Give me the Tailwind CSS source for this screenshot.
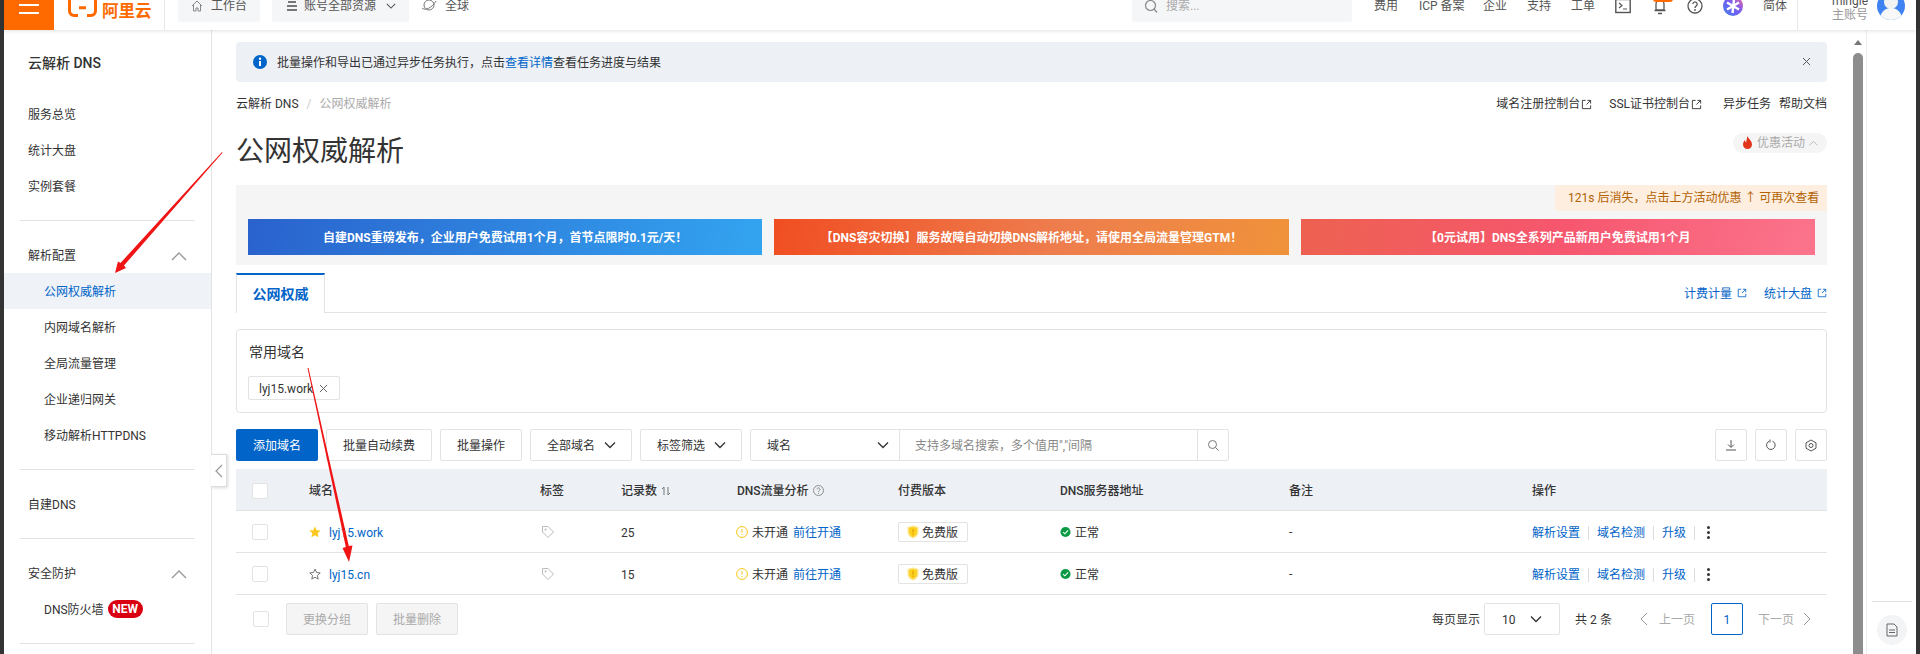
<!DOCTYPE html>
<html lang="zh-CN">
<head>
  <meta charset="UTF-8" />
  <title>公网权威解析 - 云解析 DNS</title>
  <script src="https://cdn.jsdelivr.net/npm/@tailwindcss/browser@4"></script>
</head>
<body class="flex h-screen overflow-hidden bg-white text-xs text-[#333] font-['Roboto','Noto_Sans_CJK_SC',sans-serif]">
  <svg class="hidden">
    <symbol id="down" viewBox="0 0 12 12"><path d="M1 3.5 6 8.5 11 3.5" fill="none" stroke="currentColor" stroke-width="1.3"/></symbol>
    <symbol id="up" viewBox="0 0 16 10"><path d="M1 9 8 2 15 9" fill="none" stroke="currentColor" stroke-width="1.4"/></symbol>
    <symbol id="ext" viewBox="0 0 12 12"><path d="M5 1.5H1.5v9h9V7M7 1.5h3.5V5M10.5 1.5 6 6" fill="none" stroke="currentColor" stroke-width="1"/></symbol>
    <symbol id="tag" viewBox="0 0 14 14"><path d="M1.5 1.5h5.5l5.5 5.5-5.5 5.5-5.5-5.5z" fill="none" stroke="currentColor"/><circle cx="4.5" cy="4.5" r="1" fill="currentColor"/></symbol>
    <symbol id="warn" viewBox="0 0 12 12"><circle cx="6" cy="6" r="5.4" fill="none" stroke="#f5c518"/><path d="M6 3v3.6M6 8v1" stroke="#f5c518"/></symbol>
    <symbol id="shield" viewBox="0 0 12 14"><path d="M6 .5 11.5 2v5c0 3.5-3 5.5-5.5 6.5C3.5 12.5.5 10.500.5 7V2z" fill="#fde58a"/><path d="M6 2 10 3v4c0 2.500-2 4-4 5-2-1-4-2.500-4-5V3z" fill="#fbd01f"/><path d="M6 4v3.500" stroke="#e8a400" stroke-width="1.4"/><circle cx="6" cy="9.300" r=".8" fill="#e8a400"/></symbol>
    <symbol id="ok" viewBox="0 0 12 12"><circle cx="6" cy="6" r="5.5" fill="#0a9a44"/><path d="M3.300 6.200 5.300 8 8.800 4.200" fill="none" stroke="#fff" stroke-width="1.200"/></symbol>
  </svg>

  <div class="w-1 shrink-0 bg-[#333]"></div>

  <div class="flex min-w-0 flex-1 flex-col">
    <!-- top bar, cut by the top of the shot -->
    <header class="relative z-10 h-[30px] shrink-0 bg-white shadow-[0_1px_4px_rgba(0,0,0,0.12)]">
      <div class="-mt-[19px] flex h-[49px] items-center pr-[11px] text-[#555]">
        <div class="flex h-full w-[50px] shrink-0 flex-col items-center justify-center gap-[6px] bg-[#ff6a00] pb-[1px]">
          <span class="h-[2px] w-[20px] bg-white"></span>
          <span class="h-[2px] w-[20px] bg-white"></span>
          <span class="h-[2px] w-[20px] bg-white"></span>
        </div>
        <div class="flex h-full w-[111px] shrink-0 items-center gap-[5px] border-r border-[#e8e8e8] pl-[14px] text-[#ff6a00]">
          <svg class="h-[22px] w-[29px]" viewBox="0 0 29 22"><path d="M10 20.500H6A4.500 4.500 0 0 1 1.500 16V0M19 20.500h4a4.500 4.500 0 0 0 4.500-4.500V0M11 12.700h7" fill="none" stroke="currentColor" stroke-width="3"/></svg>
          <span class="pt-[13px] text-[16.5px] leading-none font-bold whitespace-nowrap">阿里云</span>
        </div>
        <div class="ml-[13px] flex h-[32px] w-[82px] items-center rounded-[2px] bg-[#f5f6f8] pl-[13px]">
          <svg class="h-[12px] w-[12px] text-[#888]" viewBox="0 0 12 12"><path d="M1 6 6 1l5 5M2.5 5v6H5V8h2v3h2.500V5" fill="none" stroke="currentColor"/></svg>
          <span class="ml-[8px]">工作台</span>
        </div>
        <div class="ml-[12px] flex h-[32px] w-[137px] items-center rounded-[2px] bg-[#f5f6f8] pl-[14px]">
          <svg class="h-[12px] w-[12px] text-[#777]" viewBox="0 0 12 12"><path d="M2 2h8M1 6h10M1 10h10" stroke="currentColor" stroke-width="1.800"/></svg>
          <span class="ml-[6px]">账号全部资源</span>
          <svg class="ml-[10px] h-[10px] w-[10px]"><use href="#down"/></svg>
        </div>
        <div class="ml-[12px] flex items-center">
          <svg class="h-[14px] w-[16px] text-[#777]" viewBox="0 0 16 14"><circle cx="8" cy="6" r="5" fill="none" stroke="currentColor"/><path d="M1 9c3 3 10 0 14-7" fill="none" stroke="currentColor"/></svg>
          <span class="ml-[8px]">全球</span>
        </div>

        <div class="ml-auto flex h-[32px] w-[220px] items-center rounded-[2px] bg-[#f5f6f8] pl-[12px] text-[#aaa]">
          <svg class="h-[14px] w-[14px] text-[#888]" viewBox="0 0 14 14"><circle cx="6.500" cy="6.500" r="5" fill="none" stroke="currentColor" stroke-width="1.200"/><path d="m10 10 3 3.500" stroke="currentColor" stroke-width="1.200"/></svg>
          <span class="ml-[8px]">搜索...</span>
        </div>
        <span class="ml-[22px] w-[24px]">费用</span>
        <span class="ml-[21px] w-[44px] whitespace-nowrap">ICP 备案</span>
        <span class="ml-[20px] w-[24px]">企业</span>
        <span class="ml-[20px] w-[24px]">支持</span>
        <span class="ml-[20px] w-[24px]">工单</span>
        <svg class="ml-[20px] h-[16px] w-[16px]" viewBox="0 0 16 16"><rect x=".8" y="1.500" width="14.400" height="13" fill="none" stroke="currentColor" stroke-width="1.400"/><path d="m4 5 3 2.500L4 10M8 11h4" fill="none" stroke="currentColor" stroke-width="1.200"/></svg>
        <div class="relative ml-[22px] flex h-[16px] w-[14px] justify-center">
          <svg class="h-[17px] w-[14px]" viewBox="0 0 14 17"><path d="M3 12V6a4 4 0 0 1 8 0v6zM1.500 12.500h11M5 15.500h4" fill="none" stroke="currentColor" stroke-width="1.300"/></svg>
          <span class="absolute -top-[1px] left-0 h-[5px] w-[20px] rounded-b-[3px] bg-[#ff6a00]"></span>
        </div>
        <svg class="ml-[20px] h-[16px] w-[16px]" viewBox="0 0 16 16"><circle cx="8" cy="8" r="7" fill="none" stroke="currentColor" stroke-width="1.300"/><path d="M5.800 6a2.200 2.200 0 1 1 3.400 2c-.8.500-1.200 1-1.200 2" fill="none" stroke="currentColor" stroke-width="1.300"/><circle cx="8" cy="12" r=".9" fill="currentColor"/></svg>
        <svg class="mt-[1px] ml-[20px] h-[20px] w-[20px]" viewBox="0 0 20 20">
          <defs><linearGradient id="ai" x1="0" y1="1" x2="1" y2="0"><stop offset="0" stop-color="#3f7df0"/><stop offset=".55" stop-color="#7a5cf0"/><stop offset="1" stop-color="#ee6aa0"/></linearGradient></defs>
          <circle cx="10" cy="10" r="10" fill="url(#ai)"/>
          <path d="M11 3 9.500 17M4 6.500l12 7M16 6.500l-12 7" stroke="#fff" stroke-width="2.400"/>
        </svg>
        <span class="ml-[20px] w-[24px]">简体</span>
        <div class="ml-[10px] h-full w-px bg-[#e8e8e8]"></div>
        <div class="ml-[32px] flex w-[38px] flex-col items-end pt-[5px] text-right leading-[14px]">
          <span>mingle</span>
          <span class="text-[#999]">主账号</span>
        </div>
        <div class="relative ml-[9px] h-[28px] w-[28px] overflow-hidden rounded-full bg-[#3f82f2]">
          <div class="absolute top-[3px] left-[7px] h-[14px] w-[14px] rounded-full bg-[#f2f2f2]"></div>
          <div class="absolute top-[16px] left-[3px] h-[14px] w-[22px] rounded-t-full bg-[#f8f8f8]"></div>
        </div>
      </div>
    </header>

    <div class="flex min-h-0 flex-1">
      <!-- side menu -->
      <aside class="relative w-[208px] shrink-0 border-r border-[#e3e3e3]">
        <div class="mt-[15px] flex h-[36px] items-center pl-[24px] text-sm font-medium">云解析 DNS</div>
        <div class="mt-[15px] mb-[16px]">
          <div class="flex h-[36px] items-center pt-[2px] pl-[24px]">服务总览</div>
          <div class="flex h-[36px] items-center pt-[2px] pl-[24px]">统计大盘</div>
          <div class="flex h-[36px] items-center pt-[2px] pl-[24px]">实例套餐</div>
        </div>
        <div class="mx-[16px] h-px bg-[#e3e3e3]"></div>
        <div class="my-[16px]">
          <div class="flex h-[36px] items-center justify-between pt-[2px] pr-[24px] pl-[24px]">解析配置<svg class="h-[10px] w-[16px] text-[#999]"><use href="#up"/></svg></div>
          <div class="flex h-[36px] items-center bg-[#eff3f8] pt-[2px] pl-[40px] text-[#0064c8]">公网权威解析</div>
          <div class="flex h-[36px] items-center pt-[2px] pl-[40px]">内网域名解析</div>
          <div class="flex h-[36px] items-center pt-[2px] pl-[40px]">全局流量管理</div>
          <div class="flex h-[36px] items-center pt-[2px] pl-[40px]">企业递归网关</div>
          <div class="flex h-[36px] items-center pt-[2px] pl-[40px]">移动解析HTTPDNS</div>
        </div>
        <div class="mx-[16px] h-px bg-[#e3e3e3]"></div>
        <div class="my-[16px] flex h-[36px] items-center pt-[2px] pl-[24px]">自建DNS</div>
        <div class="mx-[16px] h-px bg-[#e3e3e3]"></div>
        <div class="my-[16px]">
          <div class="flex h-[36px] items-center justify-between pt-[2px] pr-[24px] pl-[24px]">安全防护<svg class="h-[10px] w-[16px] text-[#999]"><use href="#up"/></svg></div>
          <div class="flex h-[36px] items-center pl-[40px]"><span class="pt-[2px]">DNS防火墙</span><span class="ml-[4px] flex h-[18px] w-[35px] items-center justify-center rounded-full bg-[#d90012] text-xs font-bold text-white">NEW</span></div>
        </div>
        <div class="mx-[16px] h-px bg-[#e3e3e3]"></div>
        <!-- collapse handle sits over the menu edge -->
        <div class="absolute top-[424px] -right-[16px] flex h-[33px] w-[16px] items-center justify-center border border-l-0 border-[#ddd] bg-white text-[#999] shadow-[1px_1px_3px_rgba(0,0,0,0.15)]">
          <svg class="h-[14px] w-[8px]" viewBox="0 0 8 14"><path d="M7 1 1 7l6 6" fill="none" stroke="currentColor" stroke-width="1.200"/></svg>
        </div>
      </aside>

      <main class="ml-[24px] w-[1591px] shrink-0">
        <div class="mt-[12px] flex h-[40px] items-center rounded-[4px] bg-[#edf0f5] pr-[16px] pl-[17px]">
          <svg class="h-[14px] w-[14px]" viewBox="0 0 14 14"><circle cx="7" cy="7" r="7" fill="#0064c8"/><path d="M7 6v5" stroke="#fff" stroke-width="2"/><circle cx="7" cy="3.700" r="1.200" fill="#fff"/></svg>
          <span class="ml-[10px] pt-[2px]">批量操作和导出已通过异步任务执行，点击<span class="text-[#0064c8]">查看详情</span>查看任务进度与结果</span>
          <svg class="mb-[2px] ml-auto h-[9px] w-[9px] text-[#555]" viewBox="0 0 9 9"><path d="m1 1 7 7M8 1 1 8" stroke="currentColor"/></svg>
        </div>

        <div class="mt-[12px] flex h-[18px] items-center pt-[2px]">
          <span>云解析 DNS</span>
          <span class="mx-[8px] text-[#ccc]">/</span>
          <span class="text-[#aaa]">公网权威解析</span>
          <span class="ml-auto">域名注册控制台</span>
          <svg class="ml-[1px] h-[11px] w-[11px]"><use href="#ext"/></svg>
          <span class="ml-[17px]">SSL证书控制台</span>
          <svg class="ml-[1px] h-[11px] w-[11px]"><use href="#ext"/></svg>
          <span class="ml-[21px]">异步任务</span>
          <span class="ml-[8px]">帮助文档</span>
        </div>

        <div class="mt-[18px] flex h-[40px] items-start">
          <h1 class="pt-[2px] text-[28px] leading-[40px] font-normal">公网权威解析</h1>
          <div class="mt-[3px] ml-auto flex h-[20px] w-[94px] items-center rounded-full bg-[#f5f5f6] pl-[9px] text-[#aaa]">
            <svg class="h-[14px] w-[11px]" viewBox="0 0 11 14"><path d="M5.500 0c.5 2.500 4.500 4.500 4.500 8.500a4.500 4.500 0 0 1-9 0C1 6.500 2 5 3 4c0 1.500.5 2 1.200 2.300C4.500 4 4.800 2 5.500 0z" fill="#e2361c"/></svg>
            <span class="ml-[4px]">优惠活动</span>
            <svg class="ml-[4px] h-[6px] w-[9px]"><use href="#up"/></svg>
          </div>
        </div>

        <div class="relative mt-[15px] h-[80px] bg-[#f5f5f5] px-[12px] pt-[34px]">
          <div class="absolute top-0 right-0 flex h-[26px] w-[272px] items-center bg-[#fdeee0] pl-[13px] text-[#b26200]">121s 后消失，点击上方活动优惠 ↑ 可再次查看</div>
          <div class="flex h-[36px] gap-[12px] text-center font-bold text-white">
            <div class="flex-1 content-center bg-[linear-gradient(100deg,#2a62cd,#33a4f0)] pt-[1px]">自建DNS重磅发布，企业用户免费试用1个月，首节点限时0.1元/天！</div>
            <div class="flex-1 content-center bg-[linear-gradient(100deg,#f04e22,#ee7d4e_55%,#f0923a)] pt-[1px]">【DNS容灾切换】服务故障自动切换DNS解析地址，请使用全局流量管理GTM！</div>
            <div class="flex-1 content-center bg-[linear-gradient(100deg,#ed6150,#f6566e_50%,#fb748c)] pt-[1px]">【0元试用】DNS全系列产品新用户免费试用1个月</div>
          </div>
        </div>

        <div class="mt-[8px] flex h-[40px] border-b border-[#e3e3e3]">
          <div class="-mb-px flex w-[89px] items-center justify-center border-x border-t-2 border-x-[#e3e3e3] border-t-[#0064c8] bg-white text-sm font-bold text-[#0064c8]">公网权威</div>
          <div class="ml-auto flex items-center pt-[3px] text-[#0064c8]">
            <span>计费计量</span>
            <svg class="mb-[3px] ml-[5px] h-[10px] w-[10px]"><use href="#ext"/></svg>
            <span class="ml-[17px]">统计大盘</span>
            <svg class="mb-[3px] ml-[5px] h-[10px] w-[10px]"><use href="#ext"/></svg>
          </div>
        </div>

        <div class="mt-[16px] h-[84px] rounded-[4px] border border-[#e3e3e3] px-[11px]">
          <div class="mt-[12px] pl-[1px] text-sm leading-[20px]">常用域名</div>
          <div class="mt-[14px] flex h-[24px] w-[92px] items-center rounded-[2px] border border-[#e3e3e3] pt-[1px] pl-[10px]">
            lyj15.work
            <svg class="ml-[6px] h-[9px] w-[9px] text-[#666]" viewBox="0 0 9 9"><path d="m1 1 7 7M8 1 1 8" stroke="currentColor"/></svg>
          </div>
        </div>

        <div class="mt-[16px] flex h-[32px] gap-[8px]">
          <button class="w-[82px] rounded-[2px] bg-[#0064c8] pt-[2px] text-white">添加域名</button>
          <button class="w-[106px] rounded-[2px] border border-[#e3e3e3] pt-[1px]">批量自动续费</button>
          <button class="w-[82px] rounded-[2px] border border-[#e3e3e3] pt-[2px]">批量操作</button>
          <button class="flex w-[102px] items-center rounded-[2px] border border-[#e3e3e3] pl-[16px]"><span class="pt-[2px]">全部域名</span><svg class="ml-[9px] h-[12px] w-[12px]"><use href="#down"/></svg></button>
          <button class="flex w-[102px] items-center rounded-[2px] border border-[#e3e3e3] pl-[16px]"><span class="pt-[2px]">标签筛选</span><svg class="ml-[9px] h-[12px] w-[12px]"><use href="#down"/></svg></button>
          <div class="flex w-[479px] rounded-[2px] border border-[#e3e3e3]">
            <div class="flex w-[149px] items-center border-r border-[#e3e3e3] pl-[16px]"><span class="pt-[2px]">域名</span><svg class="ml-[86px] h-[12px] w-[12px]"><use href="#down"/></svg></div>
            <div class="flex w-[298px] items-center border-r border-[#e3e3e3] pt-[2px] pl-[15px] text-[#888]">支持多域名搜索，多个值用","间隔</div>
            <div class="flex flex-1 items-center justify-center text-[#777]">
              <svg class="h-[12px] w-[12px]" viewBox="0 0 12 12"><circle cx="5.500" cy="5.500" r="4" fill="none" stroke="currentColor"/><path d="m8.500 8.500 3 3" stroke="currentColor"/></svg>
            </div>
          </div>
          <button class="ml-auto flex w-[32px] items-center justify-center rounded-[2px] border border-[#e3e3e3]">
            <svg class="h-[12px] w-[12px]" viewBox="0 0 12 12"><path d="M6 1v7M3 5.500 6 8.500 9 5.500M1 11h10" fill="none" stroke="#555"/></svg>
          </button>
          <button class="flex w-[32px] items-center justify-center rounded-[2px] border border-[#e3e3e3]">
            <svg class="h-[12px] w-[12px]" viewBox="0 0 12 12"><path d="M7.500 2.200A4.300 4.300 0 1 1 4 2.300M5 .5v3" fill="none" stroke="#555"/></svg>
          </button>
          <button class="flex w-[32px] items-center justify-center rounded-[2px] border border-[#e3e3e3]">
            <svg class="h-[13px] w-[12px]" viewBox="0 0 12 13"><path d="M6 1 11 3.800v5.400L6 12 1 9.200V3.800z" fill="none" stroke="#555"/><circle cx="6" cy="6.500" r="2" fill="none" stroke="#555"/></svg>
          </button>
        </div>

        <div class="mt-[8px]">
          <div class="grid h-[42px] grid-cols-[73px_231px_81px_116px_161px_162px_229px_243px_1fr] items-center border-b border-[#e3e3e3] bg-[#edf0f5] pt-[2px] font-medium">
            <span class="ml-[16px] h-[16px] w-[16px] rounded-[2px] border border-[#e3e3e3] bg-white"></span>
            <span>域名</span>
            <span>标签</span>
            <span class="flex items-center">记录数<svg class="ml-[4px] h-[10px] w-[10px] text-[#777]" viewBox="0 0 10 10"><path d="M3 9V1L1 3M7 1v8l2-2" fill="none" stroke="currentColor"/></svg></span>
            <span class="flex items-center">DNS流量分析<svg class="ml-[4px] h-[11px] w-[11px] text-[#777]" viewBox="0 0 11 11"><circle cx="5.500" cy="5.500" r="5" fill="none" stroke="currentColor" stroke-width=".8"/><path d="M4 4.300a1.500 1.500 0 1 1 2.300 1.300c-.5.300-.8.600-.8 1.200M5.500 7.800v1" fill="none" stroke="currentColor" stroke-width=".8"/></svg></span>
            <span>付费版本</span>
            <span>DNS服务器地址</span>
            <span>备注</span>
            <span>操作</span>
          </div>

          <div class="grid h-[42px] grid-cols-[73px_231px_81px_116px_161px_162px_229px_243px_1fr] items-center border-b border-[#e3e3e3] pt-[1px]">
            <span class="ml-[16px] h-[16px] w-[16px] rounded-[2px] border border-[#e3e3e3]"></span>
            <span class="flex items-center"><svg class="h-[12px] w-[12px]" viewBox="0 0 12 12"><path d="M6 .5 7.700 4.200l4 .4-3 2.700.9 4L6 9.200 2.400 11.300l.9-4-3-2.700 4-.4z" fill="#fbc81e"/></svg><span class="ml-[8px] pt-[1px] text-[#0064c8]">lyj15.work</span></span>
            <svg class="ml-[1px] h-[14px] w-[14px] text-[#bbb]"><use href="#tag"/></svg>
            <span class="pt-[1px]">25</span>
            <span class="-ml-[1px] flex items-center"><svg class="h-[12px] w-[12px]"><use href="#warn"/></svg><span class="ml-[4px] pt-[1px]">未开通</span><span class="ml-[5px] pt-[1px] text-[#0064c8]">前往开通</span></span>
            <span class="flex h-[20px] w-[70px] items-center rounded-[2px] border border-[#e3e3e3] pl-[8px]"><svg class="h-[14px] w-[12px]"><use href="#shield"/></svg><span class="ml-[3px] pt-[1px]">免费版</span></span>
            <span class="flex items-center"><svg class="h-[12px] w-[11px]"><use href="#ok"/></svg><span class="ml-[4px] pt-[1px]">正常</span></span>
            <span>-</span>
            <span class="flex items-center pt-[1px] text-[#0064c8]">解析设置<i class="mx-[8px] h-[14px] w-px bg-[#ddd]"></i>域名检测<i class="mx-[8px] h-[14px] w-px bg-[#ddd]"></i>升级<i class="mx-[8px] h-[14px] w-px bg-[#ddd]"></i><span class="ml-[4px] flex flex-col gap-[2px]"><i class="h-[3px] w-[3px] rounded-full bg-[#333]"></i><i class="h-[3px] w-[3px] rounded-full bg-[#333]"></i><i class="h-[3px] w-[3px] rounded-full bg-[#333]"></i></span></span>
          </div>

          <div class="grid h-[42px] grid-cols-[73px_231px_81px_116px_161px_162px_229px_243px_1fr] items-center border-b border-[#e3e3e3] pt-[1px]">
            <span class="ml-[16px] h-[16px] w-[16px] rounded-[2px] border border-[#e3e3e3]"></span>
            <span class="flex items-center"><svg class="h-[12px] w-[12px]" viewBox="0 0 12 12"><path d="M6 1 7.500 4.500l3.700.4-2.800 2.500.8 3.700L6 9.200l-3.200 1.900.8-3.700L.8 4.900l3.700-.4z" fill="none" stroke="#777"/></svg><span class="ml-[8px] pt-[1px] text-[#0064c8]">lyj15.cn</span></span>
            <svg class="ml-[1px] h-[14px] w-[14px] text-[#bbb]"><use href="#tag"/></svg>
            <span class="pt-[1px]">15</span>
            <span class="-ml-[1px] flex items-center"><svg class="h-[12px] w-[12px]"><use href="#warn"/></svg><span class="ml-[4px] pt-[1px]">未开通</span><span class="ml-[5px] pt-[1px] text-[#0064c8]">前往开通</span></span>
            <span class="flex h-[20px] w-[70px] items-center rounded-[2px] border border-[#e3e3e3] pl-[8px]"><svg class="h-[14px] w-[12px]"><use href="#shield"/></svg><span class="ml-[3px] pt-[1px]">免费版</span></span>
            <span class="flex items-center"><svg class="h-[12px] w-[11px]"><use href="#ok"/></svg><span class="ml-[4px] pt-[1px]">正常</span></span>
            <span>-</span>
            <span class="flex items-center pt-[1px] text-[#0064c8]">解析设置<i class="mx-[8px] h-[14px] w-px bg-[#ddd]"></i>域名检测<i class="mx-[8px] h-[14px] w-px bg-[#ddd]"></i>升级<i class="mx-[8px] h-[14px] w-px bg-[#ddd]"></i><span class="ml-[4px] flex flex-col gap-[2px]"><i class="h-[3px] w-[3px] rounded-full bg-[#333]"></i><i class="h-[3px] w-[3px] rounded-full bg-[#333]"></i><i class="h-[3px] w-[3px] rounded-full bg-[#333]"></i></span></span>
          </div>
        </div>

        <div class="mt-[8px] flex h-[32px] items-center">
          <span class="ml-[17px] h-[16px] w-[16px] rounded-[2px] border border-[#e3e3e3]"></span>
          <button class="ml-[17px] h-full w-[82px] rounded-[2px] border border-[#e3e3e3] bg-[#f5f5f5] pt-[2px] text-[#aaa]">更换分组</button>
          <button class="ml-[8px] h-full w-[82px] rounded-[2px] border border-[#e3e3e3] bg-[#f5f5f5] pt-[2px] text-[#aaa]">批量删除</button>
          <span class="ml-auto pt-[2px]">每页显示</span>
          <div class="ml-[4px] flex h-full w-[76px] items-center rounded-[2px] border border-[#e3e3e3] pl-[17px]"><span class="pt-[2px]">10</span><svg class="ml-[15px] h-[12px] w-[12px]"><use href="#down"/></svg></div>
          <span class="ml-[15px] flex w-[37px] justify-between pt-[2px]"><span>共</span><span>2</span><span>条</span></span>
          <svg class="ml-[28px] h-[14px] w-[8px] text-[#999]" viewBox="0 0 8 14"><path d="M7 1 1 7l6 6" fill="none" stroke="currentColor"/></svg>
          <span class="ml-[11px] pt-[2px] text-[#aaa]">上一页</span>
          <div class="ml-[16px] flex h-full w-[32px] items-center justify-center rounded-[2px] border border-[#0064c8] pt-[1px] text-[#0064c8]">1</div>
          <span class="ml-[15px] pt-[2px] text-[#aaa]">下一页</span>
          <svg class="mr-[16px] ml-[9px] h-[14px] w-[8px] text-[#999]" viewBox="0 0 8 14"><path d="m1 1 6 6-6 6" fill="none" stroke="currentColor"/></svg>
        </div>
      </main>

      <!-- page scrollbar -->
      <div class="relative ml-[26px] w-[10px] shrink-0">
        <div class="absolute top-[10px] left-[1px] h-0 w-0 border-x-[4px] border-b-[5px] border-x-transparent border-b-[#777]"></div>
        <div class="absolute top-[23px] right-0 bottom-0 left-0 rounded-t-[5px] bg-[#8d8d8d]"></div>
      </div>

      <!-- right rail -->
      <div class="ml-[3px] flex flex-1 flex-col items-center justify-end border-l border-[#eee] pb-[9px]">
        <div class="mb-[13px] h-px w-[40px] bg-[#e3e3e3]"></div>
        <div class="flex h-[30px] w-[30px] items-center justify-center rounded-full bg-[#f3f4f6]">
          <svg class="h-[14px] w-[12px] text-[#666]" viewBox="0 0 12 14"><path d="M1 1h7l3 3v9H1zM3 7h6M3 9.500h6" fill="none" stroke="currentColor"/></svg>
        </div>
      </div>
    </div>
  </div>

  <div class="w-1 shrink-0 bg-[#333]"></div>

  <!-- red hand-drawn arrows over the shot -->
  <svg class="pointer-events-none absolute top-0 left-0 z-20 h-[654px] w-[1920px]" viewBox="0 0 1920 654">
    <polygon points="222,152 222.500,152.800 124,265.500 126,268 115,273 118,261.500 120.500,263" fill="#f01414"/>
    <polygon points="307.500,368 308.500,368 348.800,546 352.500,545.500 349,562 342.500,548 345.800,547" fill="#f01414"/>
  </svg>
</body>
</html>
